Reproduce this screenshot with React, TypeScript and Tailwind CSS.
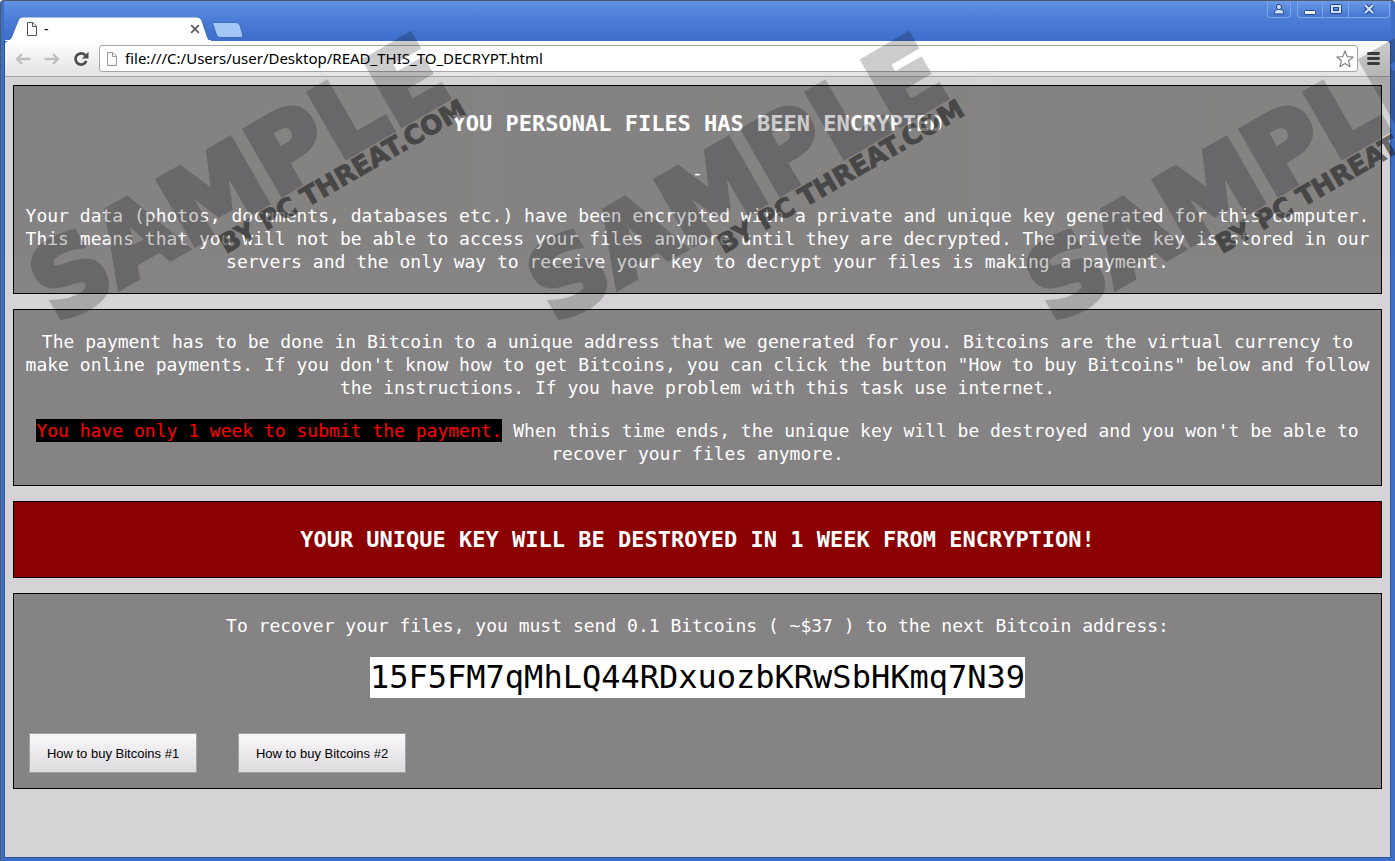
import type { ReactNode } from "react";

const MONO = "font-['DejaVu_Sans_Mono',monospace]";

function PageIcon({ className }: { className: string }) {
  return (
    <svg viewBox="0 0 12 14" className={className} fill="none" stroke="currentColor" aria-hidden="true">
      <path d="M1.5 .5h5.5l3.5 3.7v9.3h-9z" fill="#fafafa" />
      <path d="M6.5 .5v4h4" />
    </svg>
  );
}

function CaptionButton({ label, className, children }: { label: string; className: string; children: ReactNode }) {
  return (
    <button
      type="button"
      aria-label={label}
      className={`flex h-[17px] items-center justify-center border-b border-[#7fa6ea] bg-linear-to-b from-[#6b9ae6] to-[#4677d2] text-[#d5e5fb] ${className}`}
    >
      {children}
    </button>
  );
}

function TitleBar() {
  return (
    <header className="flex h-10 justify-between bg-linear-to-b from-[#5f92e3] via-[#4a7cd6] to-[#3f6dcb]">
      <div className="flex items-end">
        <div className="relative h-6 w-[208px]">
          <svg viewBox="0 0 208 24" className="absolute inset-0 h-full w-full" aria-hidden="true">
            <path
              d="M0 24C5 24 7 22 8 19L14 4C15 1 17 0 19 0H192C195 0 197 1 198 4L203 19C204 22 205 24 208 24Z"
              fill="#fff"
              stroke="#3461ae"
              strokeWidth=".8"
            />
            <path d="M1 24h206" stroke="#fff" strokeWidth="2" />
          </svg>
          <div className="relative flex h-6 items-center pr-3 pl-[22px] font-['Noto_Sans',sans-serif] text-sm text-black">
            <PageIcon className="h-[14px] w-3 text-[#555]" />
            <span className="flex-1 pl-[6px] leading-none">-</span>
            <button type="button" aria-label="Close tab" className="text-[#606060]">
              <svg viewBox="0 0 10 10" className="size-[10px]" stroke="currentColor" strokeWidth="1.9">
                <path d="M1.2 1.2l7.6 7.6M8.8 1.2L1.2 8.8" />
              </svg>
            </button>
          </div>
        </div>
        <button type="button" aria-label="New tab" className="mb-[3px] h-4 w-8">
          <svg viewBox="0 0 32 16" className="h-full w-full">
            <path
              d="M2.500 .5H23C26 .5 27 1 28 3.500L30.500 12C31 14 30.500 15.500 29 15.500H9C6.500 15.500 5 14.500 4.200 12L1 2.500C.6 1 1 .5 2.500 .5Z"
              fill="#a3c8f8"
              stroke="#3565b8"
              strokeWidth=".9"
            />
          </svg>
        </button>
      </div>
      <div className="flex items-start pr-[1px]">
        <CaptionButton label="Profile" className="mr-[6px] w-6 rounded-b border-x">
          <svg viewBox="0 0 12 12" className="size-3" fill="#cfe2fb" stroke="#26457f">
            <path d="M1.500 11V9.500C1.500 7.500 3 6.700 4.600 6.500h2.800C9 6.700 10.500 7.500 10.500 9.500V11z" />
            <circle cx="6" cy="4" r="2.600" />
          </svg>
        </CaptionButton>
        <CaptionButton label="Minimize" className="w-[26px] rounded-bl border-x">
          <svg viewBox="0 0 12 12" className="size-3" fill="#e8f1fd" stroke="#26457f">
            <rect x=".5" y="7.500" width="11" height="4" rx="1" />
          </svg>
        </CaptionButton>
        <CaptionButton label="Maximize" className="w-[25px]">
          <svg viewBox="0 0 12 12" className="size-3" fill="none">
            <rect x=".5" y="1.500" width="11" height="9" rx="1" fill="#cfe2fb" stroke="#26457f" />
            <rect x="3.500" y="4.500" width="5" height="3" fill="#5c8de0" stroke="#26457f" />
          </svg>
        </CaptionButton>
        <CaptionButton label="Close" className="w-[42px] rounded-br border-x">
          <svg viewBox="0 0 12 12" className="size-3">
            <path d="M2 2l8 8M10 2l-8 8" stroke="#26457f" strokeWidth="4.200" />
            <path d="M2 2l8 8M10 2l-8 8" stroke="#cfe2fb" strokeWidth="2.200" />
          </svg>
        </CaptionButton>
      </div>
    </header>
  );
}

function Toolbar() {
  return (
    <nav className="flex h-9 items-center rounded-t border-b border-[#a9a7a9] bg-linear-to-b from-white to-[#e4e2e4] pr-[10px] pl-[10px]">
      <button type="button" aria-label="Back" className="text-[#c0bec0]">
        <svg viewBox="0 0 16 12" className="h-3 w-4" fill="none" stroke="currentColor" strokeWidth="2.400">
          <path d="M7 1L2 6l5 5M2 6h13.500" />
        </svg>
      </button>
      <button type="button" aria-label="Forward" className="ml-[13px] text-[#c0bec0]">
        <svg viewBox="0 0 16 12" className="h-3 w-4" fill="none" stroke="currentColor" strokeWidth="2.400">
          <path d="M9 1l5 5-5 5M14 6H.5" />
        </svg>
      </button>
      <button type="button" aria-label="Reload" className="ml-[13px] text-[#4d4d4d]">
        <svg viewBox="0 0 16 16" className="size-4" fill="none" stroke="currentColor" strokeWidth="2.700">
          <path d="M12.300 4.200A5.600 5.600 0 1 0 13.300 10" />
          <path d="M15.500 .8v6.700H8.800z" fill="currentColor" stroke="none" />
        </svg>
      </button>
      <div className="ml-[10px] flex h-[27px] flex-1 items-center rounded-[3px] border border-[#a9a7a9] bg-white pr-[3px] pl-[6px]">
        <PageIcon className="h-[14px] w-3 text-[#999]" />
        <input
          type="text"
          aria-label="Address"
          defaultValue="file:///C:/Users/user/Desktop/READ_THIS_TO_DECRYPT.html"
          className="ml-[7px] h-6 flex-1 bg-transparent pb-[2px] font-['Noto_Sans',sans-serif] text-[15px] text-black outline-none"
        />
        <button type="button" aria-label="Bookmark this page" className="text-[#858585]">
          <svg viewBox="0 0 18 18" className="size-[18px]" fill="#fff" stroke="currentColor" strokeWidth="1.200" strokeLinejoin="round">
            <path d="M9 1l2.200 5.600 6 .4-4.600 3.800 1.500 5.900L9 13.400l-5.100 3.300 1.500-5.900L.8 7l6-.4z" />
          </svg>
        </button>
      </div>
      <button type="button" aria-label="Menu" className="ml-[9px] text-[#4a4a4a]">
        <svg viewBox="0 0 13 13" className="size-[13px]" stroke="currentColor" strokeWidth="2.800" strokeLinecap="round">
          <path d="M1.400 1.500h10.200M1.400 6.500h10.200M1.400 11.500h10.200" />
        </svg>
      </button>
    </nav>
  );
}

function Panel({ className, children }: { className: string; children: ReactNode }) {
  return <section className={`border border-black px-[2px] text-center ${className}`}>{children}</section>;
}

function GuideButton({ children }: { children: ReactNode }) {
  return (
    <button
      type="button"
      className="h-10 w-[168px] border border-[#a3a1a3] bg-linear-to-b from-[#faf8fa] to-[#dddbdd] font-['Liberation_Sans',sans-serif] text-[13px] text-black"
    >
      {children}
    </button>
  );
}

function Watermark() {
  return (
    <svg className="pointer-events-none absolute inset-0 h-full w-full overflow-hidden" aria-hidden="true">
      {[0, 498, 996].map((x) => (
        <g key={x} transform={`translate(${x} 0)`} className="font-['DejaVu_Sans',sans-serif] font-bold">
          <text
            transform="translate(56 323) rotate(-30)"
            className="fill-black stroke-black stroke-[6px] text-[101px] opacity-20"
          >
            SAMPLE
          </text>
          <text
            transform="translate(225 253) rotate(-30)"
            className="fill-[#202020] stroke-[#202020] stroke-1 text-[26px] opacity-60"
          >
            BY PC THREAT.COM
          </text>
        </g>
      ))}
    </svg>
  );
}

export default function App() {
  return (
    <div className="relative flex min-h-screen flex-col overflow-hidden rounded-t border-t border-l border-[#4c5a70] bg-[#3f6fc6] pr-1 pb-[3px] pl-[3px]">
      <TitleBar />
      <div className="flex flex-1 flex-col border-x border-b border-[#2d539b]">
        <Toolbar />
        <main className={`flex flex-1 flex-col gap-[15px] bg-[#d5d3d5] p-2 text-[18px] leading-[23px] text-white ${MONO}`}>
          <Panel className="bg-[#858384] pt-6 pb-5">
            <h1 className="text-[22px] leading-[27px] font-bold">YOU PERSONAL FILES HAS BEEN ENCRYPTED</h1>
            <p className="mt-6">-</p>
            <p className="mt-5">
              Your data (photos, documents, databases etc.) have been encrypted with a private and unique key generated
              for this computer. This means that you will not be able to access your files anymore until they are
              decrypted. The privete key is stored in our servers and the only way to receive your key to decrypt your
              files is making a payment.
            </p>
          </Panel>
          <Panel className="bg-[#858384] py-5">
            <p>
              The payment has to be done in Bitcoin to a unique address that we generated for you. Bitcoins are the
              virtual currency to make online payments. If you don't know how to get Bitcoins, you can click the button
              "How to buy Bitcoins" below and follow the instructions. If you have problem with this task use internet.
            </p>
            <p className="mt-5">
              <span className="bg-black py-px text-[#ff0000]">You have only 1 week to submit the payment.</span> When this time
              ends, the unique key will be destroyed and you won't be able to recover your files anymore.
            </p>
          </Panel>
          <Panel className="bg-[#8b0000] py-6">
            <h2 className="text-[22px] leading-[27px] font-bold">
              YOUR UNIQUE KEY WILL BE DESTROYED IN 1 WEEK FROM ENCRYPTION!
            </h2>
          </Panel>
          <Panel className="flex flex-col items-center bg-[#858384] pt-5 pb-[15px]">
            <p>To recover your files, you must send 0.1 Bitcoins ( ~$37 ) to the next Bitcoin address:</p>
            <p className="mt-5 bg-white text-[32px] leading-[41px] text-black">15F5FM7qMhLQ44RDxuozbKRwSbHKmq7N39</p>
            <div className="mt-[35px] flex gap-[41px] self-start pl-[13px]">
              <GuideButton>How to buy Bitcoins #1</GuideButton>
              <GuideButton>How to buy Bitcoins #2</GuideButton>
            </div>
          </Panel>
        </main>
      </div>
      <Watermark />
    </div>
  );
}
